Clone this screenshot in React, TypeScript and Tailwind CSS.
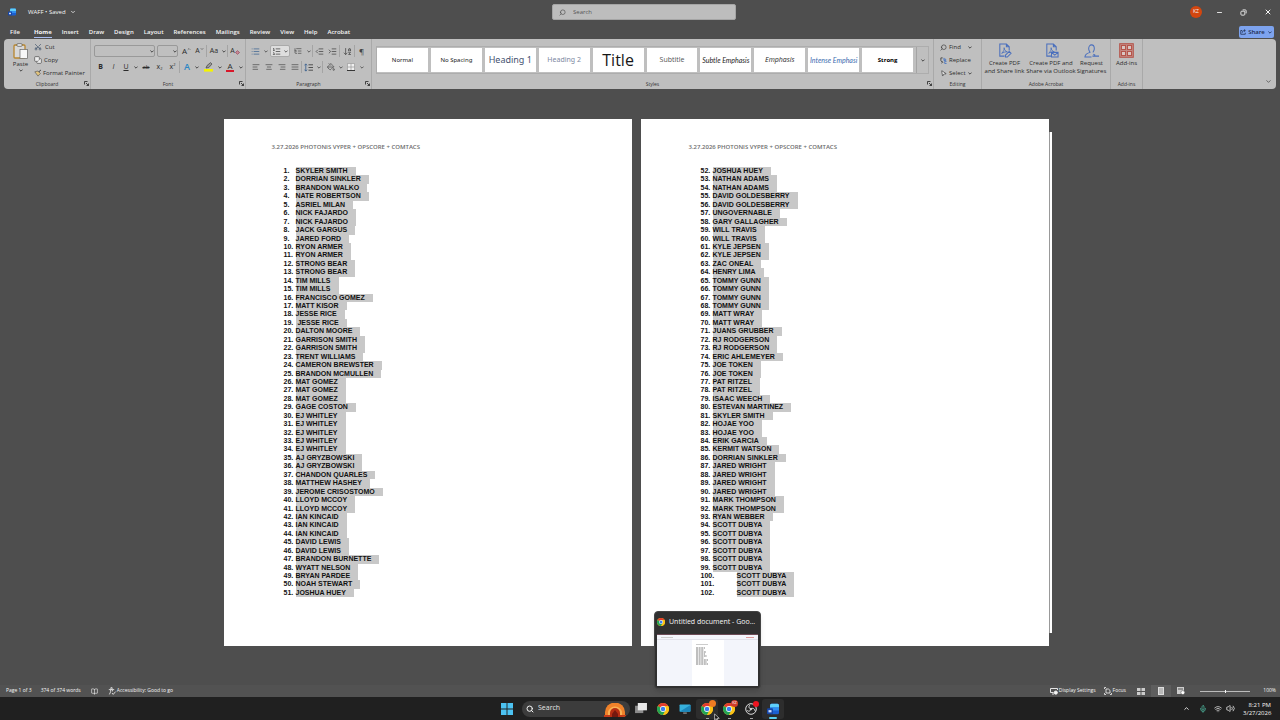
import type { ReactNode } from 'react';
import clsx from 'clsx';
import {
  AlignCenter,
  AlignJustify,
  AlignLeft,
  AlignRight,
  ArrowDownAZ,
  BookOpen,
  ChevronDown,
  ChevronUp,
  Copy,
  IndentDecrease,
  IndentIncrease,
  List,
  ListOrdered,
  ListTree,
  Mic,
  Minus,
  MousePointer2,
  PaintBucket,
  Scissors,
  Search,
  Volume2,
  Wifi,
  X,
} from 'lucide-react';

const tabs = [
  'File', 'Home', 'Insert', 'Draw', 'Design', 'Layout',
  'References', 'Mailings', 'Review', 'View', 'Help', 'Acrobat',
];

const styleCards = [
  { name: 'Normal', look: 'font-["Noto_Sans",sans-serif] text-[6px] text-neutral-900' },
  { name: 'No Spacing', look: 'font-["Noto_Sans",sans-serif] text-[6px] text-neutral-900' },
  { name: 'Heading 1', look: 'font-["Noto_Sans",sans-serif] text-[9px] text-[#44526f]' },
  { name: 'Heading 2', look: 'font-["Noto_Sans",sans-serif] text-[7px] text-[#7d88a1]' },
  { name: 'Title', look: 'font-["Open_Sans",sans-serif] text-[16px] text-neutral-900' },
  { name: 'Subtitle', look: 'font-["Open_Sans",sans-serif] text-[7px] text-neutral-600' },
  { name: 'Subtle Emphasis', look: 'font-[Lato,sans-serif] text-[7px] italic text-neutral-800' },
  { name: 'Emphasis', look: 'font-["Open_Sans",sans-serif] text-[7px] italic text-neutral-800' },
  { name: 'Intense Emphasi', look: 'font-[Lato,sans-serif] text-[7px] italic text-[#3d6cb0]' },
  { name: 'Strong', look: 'font-["Open_Sans",sans-serif] text-[6px] font-bold text-black' },
];

const firstPage = [
  'SKYLER SMITH', 'DORRIAN SINKLER', 'BRANDON WALKO', 'NATE ROBERTSON', 'ASRIEL MILAN',
  'NICK FAJARDO', 'NICK FAJARDO', 'JACK GARGUS', 'JARED FORD', 'RYON ARMER', 'RYON ARMER',
  'STRONG BEAR', 'STRONG BEAR', 'TIM MILLS', 'TIM MILLS', 'FRANCISCO GOMEZ', 'MATT KISOR',
  'JESSE RICE', ' JESSE RICE', 'DALTON MOORE', 'GARRISON SMITH', 'GARRISON SMITH',
  'TRENT WILLIAMS', 'CAMERON BREWSTER', 'BRANDON MCMULLEN', 'MAT GOMEZ', 'MAT GOMEZ',
  'MAT GOMEZ', 'GAGE COSTON', 'EJ WHITLEY', 'EJ WHITLEY', 'EJ WHITLEY', 'EJ WHITLEY',
  'EJ WHITLEY', 'AJ GRYZBOWSKI', 'AJ GRYZBOWSKI', 'CHANDON QUARLES', 'MATTHEW HASHEY',
  'JEROME CRISOSTOMO', 'LLOYD MCCOY', 'LLOYD MCCOY', 'IAN KINCAID', 'IAN KINCAID',
  'IAN KINCAID', 'DAVID LEWIS', 'DAVID LEWIS', 'BRANDON BURNETTE', 'WYATT NELSON',
  'BRYAN PARDEE', 'NOAH STEWART', 'JOSHUA HUEY',
];

const secondPage = [
  'JOSHUA HUEY', 'NATHAN ADAMS', 'NATHAN ADAMS', 'DAVID GOLDESBERRY', 'DAVID GOLDESBERRY',
  'UNGOVERNABLE', 'GARY GALLAGHER', 'WILL TRAVIS', 'WILL TRAVIS', 'KYLE JEPSEN', 'KYLE JEPSEN',
  'ZAC ONEAL', 'HENRY LIMA', 'TOMMY GUNN', 'TOMMY GUNN', 'TOMMY GUNN', 'TOMMY GUNN',
  'MATT WRAY', 'MATT WRAY', 'JUANS GRUBBER', 'RJ RODGERSON', 'RJ RODGERSON',
  'ERIC AHLEMEYER', 'JOE TOKEN', 'JOE TOKEN', 'PAT RITZEL', 'PAT RITZEL', 'ISAAC WEECH',
  'ESTEVAN MARTINEZ', 'SKYLER SMITH', 'HOJAE YOO', 'HOJAE YOO', 'ERIK GARCIA',
  'KERMIT WATSON', 'DORRIAN SINKLER', 'JARED WRIGHT', 'JARED WRIGHT', 'JARED WRIGHT',
  'JARED WRIGHT', 'MARK THOMPSON', 'MARK THOMPSON', 'RYAN WEBBER', 'SCOTT DUBYA',
  'SCOTT DUBYA', 'SCOTT DUBYA', 'SCOTT DUBYA', 'SCOTT DUBYA', 'SCOTT DUBYA', 'SCOTT DUBYA',
  'SCOTT DUBYA', 'SCOTT DUBYA',
];

function WordLogo({ className }: { className?: string }) {
  return (
    <svg viewBox="0 0 16 16" className={className} aria-hidden="true">
      <rect x="4" y="1" width="12" height="14" rx="2" fill="#1b5fd0" />
      <path d="M6 1h8a2 2 0 0 1 2 2v3H4V3a2 2 0 0 1 2-2z" fill="#5fd0fa" />
      <path d="M4 6h12v4H4z" fill="#2f8df0" />
      <rect x="0" y="7" width="8" height="8" rx="1.5" fill="#1546a8" />
      <rect x="2" y="9.5" width="4" height="3" fill="#cfe0ff" />
    </svg>
  );
}

function ChromeLogo({ className }: { className?: string }) {
  return (
    <svg viewBox="0 0 24 24" className={className} aria-hidden="true">
      <circle cx="12" cy="12" r="12" fill="#fbc116" />
      <path d="M12 12L1.6 6A12 12 0 0 1 22.4 6H12z" fill="#e33b2e" />
      <path d="M1.6 6A12 12 0 0 0 12 24l5.2-9L12 12z" fill="#23a455" />
      <path d="M12 6h10.4A12 12 0 0 1 12 24l5.2-9z" fill="#fbc116" />
      <circle cx="12" cy="12" r="5.8" fill="#fff" />
      <circle cx="12" cy="12" r="4.5" fill="#3b7ded" />
    </svg>
  );
}

function Launcher() {
  return (
    <button type="button" aria-label="More options" className="absolute right-px bottom-[3px]">
      <svg viewBox="0 0 10 10" className="size-[5px]" fill="none" stroke="#222" strokeWidth="1.6">
        <path d="M1 7V1h6M4 4l5 5M9 5v4H5" />
      </svg>
    </button>
  );
}

function Group({
  label,
  className,
  launcher,
  children,
}: {
  label: string;
  className?: string;
  launcher?: boolean;
  children: ReactNode;
}) {
  return (
    <section
      aria-label={label}
      className={clsx('relative flex flex-col border-r border-[#a9a9a9]', className)}
    >
      <div className="h-10">{children}</div>
      <p className="text-center text-[5px] leading-[10px] text-[#333]">{label}</p>
      {launcher && <Launcher />}
    </section>
  );
}

function Tool({
  label,
  className = 'w-[13px]',
  children,
}: {
  label: string;
  className?: string;
  children: ReactNode;
}) {
  return (
    <button
      type="button"
      aria-label={label}
      className={clsx('flex h-3 shrink-0 items-center justify-center', className)}
    >
      {children}
    </button>
  );
}

function Caret({ className = 'w-[7px]' }: { className?: string }) {
  return (
    <span className={clsx('flex shrink-0 justify-center', className)}>
      <svg viewBox="0 0 6 4" className="h-[3px] w-1" fill="none" stroke="currentColor" strokeWidth="1.2" aria-hidden="true">
        <path d="M0.6 0.6L3 3 5.4 0.6" />
      </svg>
    </span>
  );
}

function Divider({ className }: { className?: string }) {
  return <span className={clsx('h-3 w-px shrink-0 bg-[#a4a4a4]', className)} />;
}

function ClipboardGroup() {
  return (
    <Group label="Clipboard" launcher className="w-[87px]">
      <div className="flex pt-[3px] pl-[9px]">
        <button type="button" className="flex w-[15px] flex-col items-center pt-px">
          <svg viewBox="0 0 15 16" className="h-4 w-[15px]" aria-hidden="true">
            <rect x="1" y="2" width="11" height="13" rx="1" fill="#d8d8d8" stroke="#b8862f" strokeWidth="1.3" />
            <rect x="4" y="0.7" width="5" height="2.6" rx="0.8" fill="#eee" stroke="#555" strokeWidth="0.7" />
            <rect x="7" y="6.5" width="7.4" height="9" fill="#f7f7f7" stroke="#666" strokeWidth="0.7" />
          </svg>
          <span className="text-[6px] leading-[10px]">Paste</span>
          <Caret />
        </button>
        <div className="flex flex-col items-start gap-[3px] pl-[6px] text-[6px] leading-[10px]">
          <button type="button" className="flex items-center gap-[3px]">
            <Scissors className="size-2 -rotate-90 text-[#40536b]" />
            Cut
          </button>
          <button type="button" className="flex items-center gap-[2px]">
            <Copy className="size-2 -scale-100 text-[#444]" fill="#eee" />
            Copy
          </button>
          <button type="button" className="flex items-center gap-px whitespace-nowrap">
            <svg viewBox="0 0 10 9" className="h-2 w-2" fill="none" aria-hidden="true">
              <path d="M1 3l4-1 3 3-3 3.4z" fill="#e2c47c" stroke="#555" strokeWidth="0.8" />
              <path d="M6 3l2.6-2.2" stroke="#333" strokeWidth="1.2" />
            </svg>
            Format Painter
          </button>
        </div>
      </div>
    </Group>
  );
}

function FontGroup() {
  const box = 'h-3 appearance-none rounded-[2px] border border-[#999] bg-transparent';
  return (
    <Group label="Font" launcher className="w-[155px]">
      <div className="flex flex-col gap-1 pt-[6px] pl-[3px] text-[7px] leading-3">
        <div className="flex items-center">
          <label className="relative mr-[2px] flex items-center">
            <select aria-label="Font name" className={clsx(box, 'w-[61px]')} />
            <Caret className="pointer-events-none absolute right-0 w-[7px]" />
          </label>
          <label className="relative mr-[2px] flex items-center">
            <select aria-label="Font size" className={clsx(box, 'w-[21px]')} />
            <Caret className="pointer-events-none absolute right-0 w-[7px]" />
          </label>
          <Tool label="Grow font">
            <span className="text-[8px]">A</span>
            <ChevronUp className="mb-1 size-[4px]" strokeWidth={3} />
          </Tool>
          <Tool label="Shrink font">
            A<ChevronDown className="mb-1 size-[4px]" strokeWidth={3} />
          </Tool>
          <Divider className="mr-px" />
          <Tool label="Change case" className="w-3">Aa</Tool>
          <Caret />
          <Divider />
          <Tool label="Clear formatting" className="w-[14px]">
            A
            <svg viewBox="0 0 6 6" className="mt-[3px] size-[5px]" aria-hidden="true">
              <path d="M0.6 3L3 0.8 5.4 3 3 5.2z" fill="#c98b98" stroke="#8b2f45" strokeWidth="0.7" />
            </svg>
          </Tool>
        </div>
        <div className="flex items-center">
          <Tool label="Bold"><b>B</b></Tool>
          <Tool label="Italic"><i>I</i></Tool>
          <Tool label="Underline" className="w-3"><u>U</u></Tool>
          <Caret />
          <Tool label="Strikethrough" className="w-[14px] text-[6px]"><s>ab</s></Tool>
          <Tool label="Subscript">x<span className="mt-1 text-[4px]">2</span></Tool>
          <Tool label="Superscript">x<span className="mb-1 text-[4px]">2</span></Tool>
          <Divider className="mr-px" />
          <Tool label="Text effects" className="w-3">
            <span className="text-[9px] font-semibold text-[#2b86c5]">A</span>
          </Tool>
          <Caret />
          <Tool label="Highlight colour" className="w-4">
            <svg viewBox="0 0 9 10" className="h-[10px] w-[9px]" aria-hidden="true">
              <path d="M2 6l1-2.4L6.5 0.6 8 2 4.8 5.6z" fill="#999" stroke="#444" strokeWidth="0.7" />
              <rect y="7" width="9" height="2.6" fill="#f4f400" />
            </svg>
          </Tool>
          <Caret />
          <Tool label="Font colour" className="w-[14px]">
            <span className="w-2 border-b-2 border-[#d8182a] text-[8px] leading-2">A</span>
          </Tool>
          <Caret />
        </div>
      </div>
    </Group>
  );
}

function ParagraphGroup() {
  return (
    <Group label="Paragraph" launcher className="w-[126px]">
      <div className="flex flex-col gap-1 pt-[6px] pl-[3px] text-[#444]">
        <div className="flex items-center">
          <Tool label="Bullets"><List className="size-[9px] text-[#3f6592]" /></Tool>
          <Caret />
          <span className="mx-px flex items-center rounded-[2px] border border-[#aaa] bg-[#dedede]">
            <Tool label="Numbering" className="h-[10px] w-[11px]">
              <ListOrdered className="size-[9px]" />
            </Tool>
            <Caret />
          </span>
          <Tool label="Multilevel list" className="w-[14px]"><ListTree className="size-2" /></Tool>
          <Caret />
          <Divider />
          <Tool label="Decrease indent"><IndentDecrease className="size-[9px]" /></Tool>
          <Tool label="Increase indent"><IndentIncrease className="size-[9px]" /></Tool>
          <Divider />
          <Tool label="Sort" className="w-[14px]"><ArrowDownAZ className="size-[9px]" /></Tool>
          <Divider />
          <Tool label="Show marks"><span className="text-[8px]">¶</span></Tool>
        </div>
        <div className="flex items-center">
          <Tool label="Align left"><AlignLeft className="size-2" /></Tool>
          <Tool label="Center"><AlignCenter className="size-2" /></Tool>
          <Tool label="Align right"><AlignRight className="size-2" /></Tool>
          <Tool label="Justify"><AlignJustify className="size-2" /></Tool>
          <Divider />
          <Tool label="Line spacing">
            <svg viewBox="0 0 10 10" className="size-[9px]" fill="none" stroke="currentColor" aria-hidden="true">
              <path d="M5 2h5M5 5h5M5 8h5" />
              <path d="M2 1v8M0.6 2.6L2 1l1.4 1.6M0.6 7.4L2 9l1.4-1.6" stroke="#3f6592" />
            </svg>
          </Tool>
          <Caret />
          <Divider className="mr-px" />
          <Tool label="Shading"><PaintBucket className="size-2" /></Tool>
          <Caret />
          <Tool label="Borders" className="w-[14px]">
            <svg viewBox="0 0 9 9" className="size-2" aria-hidden="true">
              <path d="M0.5 0.5h8v8h-8zM4.5 0.5v8M0.5 4.5h8" fill="#f0f0f0" stroke="#999" strokeWidth="0.8" />
              <path d="M0 8.5h9" stroke="#222" />
            </svg>
          </Tool>
          <Caret />
        </div>
      </div>
    </Group>
  );
}

function StylesGroup() {
  return (
    <Group label="Styles" launcher className="min-w-0 flex-1">
      <div className="px-1 pt-[7px]">
        <div className="flex h-7 border border-[#adadad]">
          {styleCards.map((card) => (
            <button
              key={card.name}
              type="button"
              className={clsx(
                'my-px mr-[3px] flex min-w-0 flex-1 items-center justify-center bg-white whitespace-nowrap',
                card.look,
              )}
            >
              {card.name}
            </button>
          ))}
          <button type="button" aria-label="More styles" className="flex w-3 items-center justify-center border-l border-[#a4a4a4]">
            <Caret />
          </button>
        </div>
      </div>
    </Group>
  );
}

function EditingGroup() {
  return (
    <Group label="Editing" className="w-12">
      <div className="flex flex-col items-start gap-[3px] pt-[3px] pl-[6px] text-[6px] leading-[10px]">
        <button type="button" className="flex items-center gap-[2px]">
          <Search className="size-[7px] -scale-x-100" />
          Find
          <Caret className="ml-1 w-[7px]" />
        </button>
        <button type="button" className="flex items-center gap-[2px]">
          <svg viewBox="0 0 8 8" className="size-[7px]" fill="none" aria-hidden="true">
            <path d="M3 1H1v3l2 2M1.6 7L3 6 1.8 4.8" stroke="#333" strokeWidth="0.9" />
            <path d="M4.5 1v3h2V2.4h-2M7.5 5H5.4v2.4h2.1" stroke="#3f6fc0" strokeWidth="0.9" />
          </svg>
          Replace
        </button>
        <button type="button" className="flex items-center gap-[2px]">
          <MousePointer2 className="size-[7px] rotate-12" fill="#eee" />
          Select
          <Caret className="w-[5px]" />
        </button>
      </div>
    </Group>
  );
}

function AcrobatButton({ lines, className, children }: { lines: string[]; className: string; children: ReactNode }) {
  return (
    <button type="button" className={clsx('flex flex-col items-center text-[6px] leading-2 whitespace-nowrap', className)}>
      <svg viewBox="0 0 16 16" className="mb-px size-[15px]" fill="none" stroke="#4a6fbd" strokeWidth="1.1" aria-hidden="true">
        {children}
      </svg>
      {lines.map((line) => (
        <span key={line}>{line}</span>
      ))}
    </button>
  );
}

function AcrobatGroup() {
  const sheet = (
    <>
      <path d="M8 14H3V1h7l3 3v4M10 1v3h3" />
      <path d="M5 11c2-2 3-4 2.6-6 0 2 1.4 4 3.4 4.4-2 0-4 .4-6 1.6z" strokeWidth="0.9" />
    </>
  );
  return (
    <Group label="Adobe Acrobat" className="w-[129px]">
      <div className="flex justify-center gap-1 pt-1 pr-[2px]">
        <AcrobatButton className="w-10" lines={['Create PDF', 'and Share link']}>
          {sheet}
          <path d="M9 13l4-4 2 2-4 4H9z" fill="#bfbfbf" />
        </AcrobatButton>
        <AcrobatButton className="w-[45px]" lines={['Create PDF and', 'Share via Outlook']}>
          {sheet}
          <path d="M8 10h7v5H8zM8 10l3.5 3L15 10" fill="#bfbfbf" />
        </AcrobatButton>
        <AcrobatButton className="w-[28px]" lines={['Request', 'Signatures']}>
          <path d="M5 6a3 4 0 1 1 6 0c0 2-1 3-1.4 4M5 6c0 2 1 3 1.4 4C3 11 1 12 1 15h7" />
          <path d="M9 14h7M10 12l2 1" />
        </AcrobatButton>
      </div>
    </Group>
  );
}

function AddInsGroup() {
  return (
    <Group label="Add-ins" className="w-8">
      <button type="button" className="flex w-full flex-col items-center pt-1 text-[6px] leading-2">
        <svg viewBox="0 0 15 15" className="mb-px size-[15px]" fill="#d9c6c3" stroke="#b5544a" aria-hidden="true">
          <rect x="0.7" y="0.7" width="13.6" height="13.6" fill="#c48a84" />
          <rect x="2.5" y="2.5" width="4" height="4" />
          <rect x="8.5" y="2.5" width="4" height="4" />
          <rect x="2.5" y="8.5" width="4" height="4" />
          <rect x="8.5" y="8.5" width="4" height="4" />
        </svg>
        Add-ins
      </button>
    </Group>
  );
}

function TitleBar() {
  return (
    <header className="grid h-6 grid-cols-[1fr_auto_1fr] items-center pl-2 text-[7px] text-neutral-100">
      <div className="flex items-center">
        <WordLogo className="size-2" />
        <button type="button" className="ml-3 flex items-center gap-1 text-[6px] font-medium">
          WAFF • Saved
          <ChevronDown className="size-[6px]" strokeWidth={3} />
        </button>
      </div>
      <label className="flex h-4 w-[184px] items-center gap-[7px] rounded-[2px] border border-[#a5a5a5] bg-[#bdbdbd] px-[6px] text-[#444]">
        <Search className="size-[7px] -scale-x-100" />
        <input
          type="search"
          aria-label="Search"
          placeholder="Search"
          className="min-w-0 flex-1 bg-transparent text-[6px] placeholder:text-[#555]"
        />
      </label>
      <div className="flex items-center justify-end pr-2">
        <span className="mr-[14px] flex size-3 items-center justify-center rounded-full bg-[#d3460f] text-[5px]">KZ</span>
        <button type="button" aria-label="Minimize" className="mr-[17px]"><Minus className="size-[7px]" strokeWidth={3} /></button>
        <button type="button" aria-label="Restore" className="mr-[17px]">
          <svg viewBox="0 0 8 8" className="size-[7px]" fill="none" stroke="currentColor" aria-hidden="true">
            <rect x="1" y="2.5" width="4.5" height="4.5" rx="1" />
            <path d="M3 1h3a1 1 0 0 1 1 1v3" />
          </svg>
        </button>
        <button type="button" aria-label="Close"><X className="size-2" strokeWidth={3} /></button>
      </div>
    </header>
  );
}

function TabBar() {
  return (
    <nav className="flex h-[15px] items-center gap-[10px] pt-px pr-[6px] pl-[10px] text-[6px] font-semibold text-neutral-100">
      {tabs.map((tab) => (
        <button
          key={tab}
          type="button"
          className={clsx(
            'border-b leading-[10px]',
            tab === 'Home' ? 'ml-1 border-[#a9bdf0] font-bold' : 'border-transparent',
          )}
        >
          {tab}
        </button>
      ))}
      <button
        type="button"
        className="ml-auto flex h-3 w-[35px] items-center justify-center gap-[2px] rounded-[2px] bg-[#7da3ee] text-[#1d2c4d]"
      >
        <svg viewBox="0 0 8 8" className="size-[6px]" fill="none" stroke="currentColor" aria-hidden="true">
          <path d="M3 2H1v5h6V5M3 5c0-2 1-3 4-3M5.4 0.6L7 2 5.4 3.6" />
        </svg>
        Share
        <Caret className="ml-px w-[5px]" />
      </button>
    </nav>
  );
}

function Page({ names, start }: { names: string[]; start: number }) {
  return (
    <article className="flex h-[527px] max-w-[408px] flex-1 flex-col bg-white pl-12">
      <p className="mt-[23px] mb-[15px] font-['Open_Sans',sans-serif] text-[6px] leading-[10px] font-semibold text-[#6c6c6c]">
        3.27.2026 PHOTONIS VYPER + OPSCORE + COMTACS
      </p>
      <ol className="mb-[49px] flex min-h-0 flex-1 flex-col pl-3 font-['Liberation_Sans',Arial,sans-serif] text-[7px] leading-2 font-bold text-[#111]">
        {names.map((name, i) => {
          const number = start + i;
          return (
            <li key={number} className="flex min-h-0 flex-1">
              <span className={number > 99 ? 'w-9' : 'w-3'}>{number}.</span>
              <span className="bg-[#c8c8c8] pr-2 whitespace-pre">{name}</span>
            </li>
          );
        })}
      </ol>
    </article>
  );
}

function StatusBar() {
  return (
    <footer className="flex h-3 items-center bg-[#525252] pr-1 pl-[6px] text-[5px] text-neutral-100">
      <span>Page 1 of 3</span>
      <span className="ml-[9px]">374 of 374 words</span>
      <BookOpen className="ml-[10px] size-[7px]" />
      <button type="button" className="ml-[10px] flex items-center gap-px">
        <svg viewBox="0 0 8 8" className="size-2" fill="none" stroke="currentColor" strokeWidth="0.8" aria-hidden="true">
          <circle cx="3.5" cy="1.2" r="0.8" />
          <path d="M0.8 2.6h5.4M2.6 2.8v2L1.4 7.4M4.4 2.8v1.6M4 6l1.2 1.4L7.6 4.6" />
        </svg>
        Accessibility: Good to go
      </button>
      <button type="button" className="ml-auto flex items-center gap-px">
        <svg viewBox="0 0 8 8" className="size-2" fill="none" stroke="currentColor" strokeWidth="0.9" aria-hidden="true">
          <path d="M3.5 5.5h-3v-4h7V3M2 7h2" />
          <circle cx="5.8" cy="5.6" r="1.6" fill="currentColor" />
        </svg>
        Display Settings
      </button>
      <button type="button" className="ml-2 flex items-center gap-px">
        <svg viewBox="0 0 8 8" className="size-2" fill="none" stroke="currentColor" strokeWidth="0.8" aria-hidden="true">
          <path d="M0.5 2V0.5H2M0.5 6v1.5H2M6 7.5h1.5V6M2 2h2.4L6 3.4V6H2z" />
        </svg>
        Focus
      </button>
      <button type="button" aria-label="Read mode" className="ml-[5px] flex w-5 justify-center">
        <svg viewBox="0 0 8 7" className="h-[7px] w-2" fill="#ccc" aria-hidden="true">
          <path d="M0 0h3.5v3H0zM4.5 0H8v3H4.5zM0 4h3.5v3H0zM4.5 4H8v3H4.5z" />
        </svg>
      </button>
      <button type="button" aria-label="Print layout" className="flex h-3 w-5 items-center justify-center bg-[#5e5e5e]">
        <svg viewBox="0 0 6 8" className="h-2 w-[6px]" aria-hidden="true">
          <path d="M0 0h6v8H0z" fill="#ddd" />
          <path d="M1 2h4M1 4h4M1 6h4" stroke="#777" strokeWidth="0.7" />
        </svg>
      </button>
      <button type="button" aria-label="Web layout" className="flex w-5 justify-center">
        <svg viewBox="0 0 8 8" className="size-2" aria-hidden="true">
          <path d="M0 0h7v7H0z" fill="#ccc" />
          <path d="M1 2h5" stroke="#555" />
          <circle cx="5.8" cy="5.6" r="2" fill="#fff" stroke="#555" strokeWidth="0.6" />
        </svg>
      </button>
      <input
        type="range"
        aria-label="Zoom"
        defaultValue={50}
        className="mx-[9px] h-px w-[50px] appearance-none bg-[#bbb] [&::-webkit-slider-thumb]:h-[3px] [&::-webkit-slider-thumb]:w-px [&::-webkit-slider-thumb]:appearance-none [&::-webkit-slider-thumb]:bg-neutral-100"
      />
      <span className="w-[17px] text-right">100%</span>
    </footer>
  );
}

function TaskButton({ label, running, active, children }: { label: string; running?: boolean; active?: boolean; children: ReactNode }) {
  return (
    <button
      type="button"
      aria-label={label}
      className={clsx('relative flex h-5 w-[22px] items-center justify-center rounded-[3px]', active && 'bg-[#2d2d2d]')}
    >
      {children}
      {running && <span className="absolute bottom-0 h-px w-[3px] bg-neutral-400" />}
    </button>
  );
}

function Preview() {
  return (
    <div className="absolute bottom-[31px] left-1/2 z-10 ml-[14px] h-[78px] w-[107px] rounded-[4px] border border-[#444] bg-[#303030] p-[2px] shadow-md">
      <div className="flex h-4 items-center gap-1 text-[7px] text-neutral-100">
        <ChromeLogo className="size-2" />
        <span className="whitespace-nowrap">Untitled document - Goo...</span>
      </div>
      <div className="mt-1 flex h-[52px] flex-col border-t border-[#6b4a55] bg-[#f3f5fb]">
        <div className="flex h-[5px] items-center justify-between border-b border-[#e2e2ea] px-1">
          <span className="h-px w-3 bg-[#ccc]" />
          <span className="h-px w-2 bg-[#d99]" />
        </div>
        <div className="mx-auto flex w-8 flex-1 flex-col items-start bg-white pt-1 pl-1">
          <span className="mb-[2px] h-px w-3 bg-[#ccc]" />
          <svg viewBox="0 0 12 18" className="h-[18px] w-3" aria-hidden="true">
            <path
              d="M0 1h9M0 3h8M0 5h10M0 7h9M0 9h11M0 11h8M0 13h12M0 15h11M0 17h12"
              stroke="#aaa"
              strokeWidth="1.3"
              strokeDasharray="2 0.6"
            />
          </svg>
        </div>
      </div>
    </div>
  );
}

function Taskbar() {
  return (
    <div className="relative grid h-[23px] grid-cols-[1fr_auto_1fr] items-center bg-[#202020] text-neutral-100">
      <Preview />
      <div className="col-start-2 flex items-center pl-[5px]">
        <button type="button" aria-label="Start" className="mr-[9px]">
          <svg viewBox="0 0 13 13" className="size-3" fill="#4cc2f1" aria-hidden="true">
            <path d="M0 0h6v6H0zM7 0h6v6H7zM0 7h6v6H0zM7 7h6v6H7z" />
          </svg>
        </button>
        <label className="flex h-4 w-[108px] items-center gap-1 overflow-hidden rounded-full bg-[#3c3c3c] pr-1 pl-1">
          <Search className="size-2" strokeWidth={3} />
          <input type="search" aria-label="Search" placeholder="Search" className="min-w-0 flex-1 bg-transparent text-[7px] placeholder:text-neutral-200" />
          <svg viewBox="0 0 22 14" className="h-[14px] w-[22px] self-end" aria-hidden="true">
            <path d="M1 14V9a9.5 9 0 0 1 20 0v5z" fill="#f0822a" />
            <path d="M4 14V10a7 6.5 0 0 1 14 0v4z" fill="#f9b255" />
            <path d="M6 14v-4a5 5 0 0 1 10 0v4z" fill="#b52d12" />
            <path d="M8 14v-3l3-4 3 4v3z" fill="#74180f" />
            <path d="M0 12h6v2H0zM16 12h6v2h-6z" fill="#c43a18" />
          </svg>
        </label>
        <div className="flex">
          <TaskButton label="Task view">
            <svg viewBox="0 0 13 12" className="h-[11px] w-3" aria-hidden="true">
              <rect y="3" width="9" height="8" fill="#8a8a8a" />
              <rect x="3" width="10" height="8" fill="#e8e8e8" />
            </svg>
          </TaskButton>
          <TaskButton label="Chrome"><ChromeLogo className="size-3" /></TaskButton>
          <TaskButton label="Desktop">
            <svg viewBox="0 0 12 11" className="h-[10px] w-3" aria-hidden="true">
              <rect y="0.5" width="12" height="8" rx="0.8" fill="#36b0dc" />
              <path d="M0 8.5L12 1v6.7a.8.8 0 0 1-.8.8z" fill="#1c86bb" />
              <path d="M4 10h4" stroke="#888" strokeWidth="1.5" />
            </svg>
          </TaskButton>
          <TaskButton label="Chrome profile 1" running active>
            <ChromeLogo className="size-3" />
            <span className="absolute top-px right-[2px] size-[7px] rounded-full bg-[#ef7b22]" />
          </TaskButton>
          <TaskButton label="Chrome profile KZ" running>
            <ChromeLogo className="size-3" />
            <span className="absolute top-px right-[2px] flex size-[7px] items-center justify-center rounded-full bg-[#cf3d2a] text-[4px]">KZ</span>
          </TaskButton>
          <TaskButton label="Recorder" running>
            <svg viewBox="0 0 12 12" className="size-3" fill="none" stroke="#ddd" aria-hidden="true">
              <circle cx="6" cy="6" r="5.3" fill="#222" />
              <path d="M6 6c-2.4-.6-2.6-3-1-4M6 6c-.6 2.4-3 2.8-4 1.2M6 6c1.8-1.6 4 0 4 2" />
              <circle cx="6" cy="6" r="0.8" />
            </svg>
            <span className="absolute top-[2px] right-[3px] size-[6px] rounded-full bg-[#ee1420]" />
          </TaskButton>
          <TaskButton label="Word" active>
            <WordLogo className="size-3" />
            <span className="absolute bottom-0 h-[2px] w-2 rounded-full bg-[#58d0f2]" />
          </TaskButton>
        </div>
      </div>
      <div className="flex items-center justify-end pr-[9px]">
        <ChevronUp className="size-[7px]" strokeWidth={3} />
        <Mic className="ml-[9px] size-2 text-[#55c9ae]" />
        <Wifi className="ml-[7px] size-2" />
        <Volume2 className="ml-1 size-[9px]" />
        <div className="ml-2 w-[28px] text-right text-[6px] leading-2">
          <p>8:21 PM</p>
          <p>3/27/2026</p>
        </div>
      </div>
      {/* mouse pointer */}
      <svg viewBox="0 0 8 11" className="absolute top-4 left-1/2 z-20 ml-[74px] h-[9px] w-[6px]" aria-hidden="true">
        <path d="M0.8 0.8v8l2-1.8 1.4 3 1.2-.6L4 6.6h3z" fill="#111" stroke="#fff" strokeWidth="0.8" />
      </svg>
    </div>
  );
}

export default function App() {
  return (
    <div className="flex min-h-screen flex-col bg-[#4e4e4e] font-['Open_Sans','Noto_Sans',sans-serif]">
      <TitleBar />
      <TabBar />
      <div className="relative mx-1 flex h-[50px] rounded-[4px] bg-[#bfbfbf] text-[#2b2b2b]">
        <ClipboardGroup />
        <FontGroup />
        <ParagraphGroup />
        <StylesGroup />
        <EditingGroup />
        <AcrobatGroup />
        <AddInsGroup />
        <div className="flex w-[133px] items-end justify-end p-1">
          <button type="button" aria-label="Collapse ribbon"><ChevronDown className="size-[7px]" /></button>
        </div>
      </div>
      <main className="flex flex-1 items-start justify-center pt-[30px] pr-[5px]">
        <Page names={firstPage} start={1} />
        <div className="w-[9px]" />
        <Page names={secondPage} start={52} />
        <div className="mt-[13px] h-[501px] w-[3px] border-l border-[#999] bg-white" />
      </main>
      <StatusBar />
      <Taskbar />
    </div>
  );
}
